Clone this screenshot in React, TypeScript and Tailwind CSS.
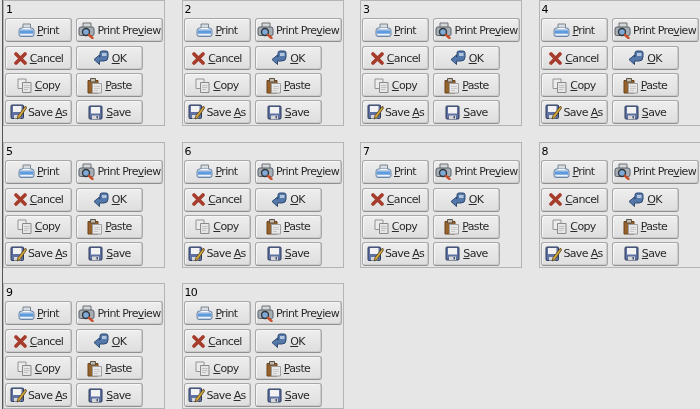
import type { ReactNode } from "react";

const PrintIcon = () => (
  <svg width="17" height="15" viewBox="0 0 17 15">
    <path d="M5 1h7.500v6H5z" fill="#d9dde2" stroke="#7d8790" />
    <path d="M1 7.500q0-2.500 2.500-2.500h10q2.500 0 2.500 2.500v4q0 2-2 2H3q-2 0-2-2z" fill="#b7cbe2" stroke="#6d86a6" />
    <path d="M2 7.500h13v3H2z" fill="#5c9be0" />
    <path d="M2.500 11.500h12" stroke="#eef3f8" />
    <path d="M4.500 5.500h8" stroke="#f4f6f8" />
  </svg>
);

const PreviewIcon = () => (
  <svg width="18" height="17" viewBox="0 0 18 17">
    <path d="M5 1h8v5.500H5z" fill="#d4d7da" stroke="#6c7074" />
    <path d="M1 7q0-2 2-2h11q2 0 2 2v5q0 1.500-1.500 1.500h-12Q1 13.500 1 12z" fill="#a6aeb6" stroke="#5a6068" />
    <circle cx="8" cy="10" r="3.500" fill="#7fa9d6" stroke="#34383c" strokeWidth="1.400" />
    <path d="M11 13l3.500 3" stroke="#c8502c" strokeWidth="2.400" strokeLinecap="round" />
  </svg>
);

const CancelIcon = () => (
  <svg width="13" height="13" viewBox="0 0 13 13">
    <path d="M2 2l9 9M11 2l-9 9" stroke="#a63c2c" strokeWidth="3.600" strokeLinecap="round" />
  </svg>
);

const OkIcon = () => (
  <svg width="16" height="16" viewBox="0 0 16 16">
    <path d="M7 7V3q0-2 2-2h4q2 0 2 2v4q0 4-4 4H6.500v3.500L1 9.500 6.500 5v2z" fill="#5578aa" stroke="#2f4a72" strokeLinejoin="round" />
    <path d="M9 3h4.500v3H9z" fill="#b4c6de" />
  </svg>
);

const CopyIcon = () => (
  <svg width="15" height="15" viewBox="0 0 15 15">
    <path d="M1 1h8v9.500H1z" fill="#ececec" stroke="#949494" />
    <path d="M5.500 4.500h8.500v10H5.500z" fill="#e6e6e6" stroke="#8a8a8a" />
    <path d="M7 7.500h5.500M7 9.500h5.500M7 11.500h4" stroke="#c0c0c0" />
  </svg>
);

const PasteIcon = () => (
  <svg width="15" height="17" viewBox="0 0 15 17">
    <path d="M1 3.500h10V16H1z" fill="#96622c" stroke="#6a431d" />
    <path d="M3.500 1.500h5V5h-5z" fill="#c2bcae" stroke="#5c5346" />
    <path d="M5.500 6.500h9V16h-9z" fill="#e8e8e8" stroke="#a0a0a0" />
    <path d="M7 9.500h6M7 11.500h6M7 13.500h4" stroke="#c8c8c8" />
  </svg>
);

const SaveAsIcon = () => (
  <svg width="17" height="16" viewBox="0 0 17 16">
    <path d="M1 2q0-1 1-1h10.500q1 0 1 1v11.500q0 1-1 1H2q-1 0-1-1z" fill="#5f70a2" stroke="#2d3a58" />
    <path d="M3 2h8.500v6H3z" fill="#f2f2f2" />
    <path d="M4 11h6.500v3.500H4z" fill="#d8d8d8" />
    <path d="M15.500 2L8 11.500 7 15l3-1.500L16.500 4z" fill="#d5a63c" stroke="#51401c" strokeWidth="0.800" />
  </svg>
);

const SaveIcon = () => (
  <svg width="15" height="15" viewBox="0 0 15 15">
    <path d="M1 2q0-1 1-1h11q1 0 1 1v11q0 1-1 1H2q-1 0-1-1z" fill="#5f70a2" stroke="#2d3a58" />
    <path d="M3 2h9v6.500H3z" fill="#f2f2f2" />
    <path d="M4 10.500h7V14H4z" fill="#d8d8d8" />
    <path d="M8.500 11h1.500v2.500H8.500z" fill="#44506e" />
  </svg>
);

type ButtonProps = {
  icon: ReactNode;
  before?: string;
  mnemonic: string;
  after: string;
  className?: string;
};

const GtkButton = ({ icon, before, mnemonic, after, className }: ButtonProps) => (
  <div
    className={`flex h-[24px] items-center justify-center rounded-[3px] border border-[#a8a8a8] border-b-[#8f8f8f] bg-gradient-to-b from-[#eeeeee] to-[#dedede] shadow-[inset_1px_1px_0_#f6f6f6,inset_-1px_-1px_0_#cccccc] ${className}`}
  >
    {icon}
    <span className="whitespace-nowrap pt-[2px]">
      {before}
      <span className="underline underline-offset-1">{mnemonic}</span>
      {after}
    </span>
  </div>
);

const Panel = ({ n }: { n: number }) => (
  <div className="flex h-[126px] w-[162px] flex-col border border-[#b4b4b4] pl-[1px]">
    <div className="h-[17px] pt-[2px] pl-[1px] leading-[14px] text-black">{n}</div>
    <div className="flex flex-col gap-[3px]">
      <div className="mb-[1px] flex gap-[4px]">
        <GtkButton className="w-[67px] gap-[2px]" icon={<PrintIcon />} mnemonic="P" after="rint" />
        <GtkButton className="w-[87px] gap-[1px]" icon={<PreviewIcon />} before="Print Pre" mnemonic="v" after="iew" />
      </div>
      <div className="flex gap-[4px]">
        <GtkButton className="w-[67px] gap-[3px]" icon={<CancelIcon />} mnemonic="C" after="ancel" />
        <GtkButton className="w-[67px] gap-[3px]" icon={<OkIcon />} mnemonic="O" after="K" />
      </div>
      <div className="flex gap-[4px]">
        <GtkButton className="w-[67px] gap-[3px]" icon={<CopyIcon />} mnemonic="C" after="opy" />
        <GtkButton className="w-[67px] gap-[3px]" icon={<PasteIcon />} mnemonic="P" after="aste" />
      </div>
      <div className="flex gap-[4px]">
        <GtkButton className="w-[67px] gap-[1px]" icon={<SaveAsIcon />} before="Save " mnemonic="A" after="s" />
        <GtkButton className="w-[67px] gap-[3px]" icon={<SaveIcon />} mnemonic="S" after="ave" />
      </div>
    </div>
  </div>
);

export default function App() {
  const panels = [1, 2, 3, 4, 5, 6, 7, 8, 9, 10];
  return (
    <div className="h-[409px] w-[700px] overflow-hidden bg-[#e6e6e6] font-['DejaVu_Sans',sans-serif] text-[11px] tracking-[-0.65px] text-[#2a2a2a] blur-[0.45px]">
      <div className="ml-[2px] h-full border-l border-[#555]">
        <div className="grid grid-cols-[repeat(4,162px)] gap-x-[16.500px] gap-y-[15.500px]">
          {panels.map((n) => (
            <Panel key={n} n={n} />
          ))}
        </div>
      </div>
    </div>
  );
}
